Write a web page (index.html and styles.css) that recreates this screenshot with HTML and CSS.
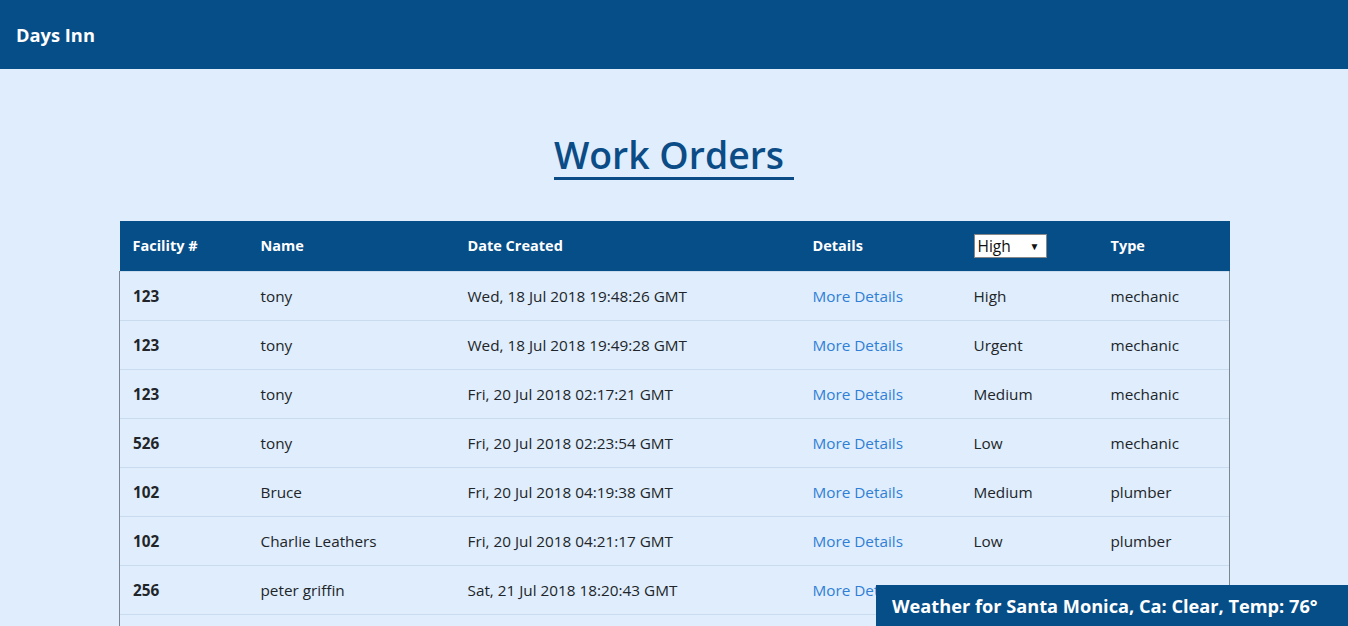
FILE: index.html
```html
<!DOCTYPE html>
<html>
<head>
<meta charset="utf-8">
<link rel="stylesheet" href="styles.css">
</head>
<body>
<nav class="navbar"><span class="brand">Days Inn</span></nav>
<main class="container">
  <h1 class="title"><span class="title-text">Work Orders</span></h1>
  <table class="orders">
    <thead>
      <tr>
        <th class="c-fac">Facility #</th>
        <th class="c-name">Name</th>
        <th class="c-date">Date Created</th>
        <th class="c-det">Details</th>
        <th class="c-pri"><div class="select"><span>High</span><span class="arrow">▼</span></div></th>
        <th class="c-type">Type</th>
      </tr>
    </thead>
    <tbody>
      <tr><th>123</th><td>tony</td><td>Wed, 18 Jul 2018 19:48:26 GMT</td><td><a href="#">More Details</a></td><td>High</td><td>mechanic</td></tr>
      <tr><th>123</th><td>tony</td><td>Wed, 18 Jul 2018 19:49:28 GMT</td><td><a href="#">More Details</a></td><td>Urgent</td><td>mechanic</td></tr>
      <tr><th>123</th><td>tony</td><td>Fri, 20 Jul 2018 02:17:21 GMT</td><td><a href="#">More Details</a></td><td>Medium</td><td>mechanic</td></tr>
      <tr><th>526</th><td>tony</td><td>Fri, 20 Jul 2018 02:23:54 GMT</td><td><a href="#">More Details</a></td><td>Low</td><td>mechanic</td></tr>
      <tr><th>102</th><td>Bruce</td><td>Fri, 20 Jul 2018 04:19:38 GMT</td><td><a href="#">More Details</a></td><td>Medium</td><td>plumber</td></tr>
      <tr><th>102</th><td>Charlie Leathers</td><td>Fri, 20 Jul 2018 04:21:17 GMT</td><td><a href="#">More Details</a></td><td>Low</td><td>plumber</td></tr>
      <tr><th>256</th><td>peter griffin</td><td>Sat, 21 Jul 2018 18:20:43 GMT</td><td><a href="#">More Details</a></td><td>Low</td><td>plumber</td></tr>
      <tr><th>256</th><td>peter griffin</td><td>Sat, 21 Jul 2018 18:25:10 GMT</td><td><a href="#">More Details</a></td><td>High</td><td>plumber</td></tr>
    </tbody>
  </table>
</main>
<div class="weather">Weather for Santa Monica, Ca: Clear, Temp: 76°</div>
</body>
</html>
```
FILE: styles.css
```css
* { box-sizing: border-box; }
html, body {
  margin: 0;
  padding: 0;
}
body {
  background: #dfedfc;
  font-family: "Open Sans", "Liberation Sans", sans-serif;
  color: #212529;
  font-size: 15.3px;
}
.navbar {
  height: 69px;
  background: #064e88;
  display: flex;
  align-items: center;
  padding: 0 16px;
}
.brand {
  color: #fff;
  font-weight: 700;
  font-size: 18.3px;
  margin-top: 0;
}
.container {
  width: 1110px;
  margin: 0 auto;
}
.title {
  text-align: center;
  margin: 64px 0 41px;
  font-size: 37.4px;
  font-weight: 600;
  line-height: 1.2;
  color: #0b4c86;
}
.title-text {
  display: inline-block;
  border-bottom: 3px solid #0b4c86;
  padding-right: 10px;
  padding-left: 0;
  line-height: 44px;
  padding-bottom: 0;
}
.orders {
  width: 1110px;
  border-collapse: collapse;
  table-layout: fixed;
}
.orders th, .orders td {
  padding: 12px 11px 12px 13px;
  height: 49px;
  text-align: left;
  line-height: 24px;
  white-space: nowrap;
}
.orders thead th {
  background: #064e88;
  color: #fff;
  font-weight: 700;
  font-size: 14.5px;
  height: 50px;
  padding-top: 13px;
  padding-bottom: 12px;
}
.orders tbody tr {
  border-top: 1px solid #c9dcef;
  border-left: 1px solid #7d8690;
  border-right: 1px solid #7d8690;
}
.orders tbody th { font-weight: 700; }
.c-fac { width: 128px; }
.c-name { width: 207px; }
.c-date { width: 345px; }
.c-det { width: 161px; }
.c-pri { width: 137px; }
.c-type { width: 132px; }
.orders a {
  color: #2f7fd6;
  text-decoration: none;
}
.select {
  width: 73px;
  height: 24px;
  background: #fff;
  border: 1px solid #888;
  color: #111;
  font-weight: 400;
  font-size: 15.5px;
  display: flex;
  align-items: center;
  justify-content: space-between;
  padding: 0 6px 0 3px;
}
.arrow { font-size: 10px; }
.weather {
  position: fixed;
  right: 0;
  bottom: 0;
  width: 472px;
  height: 41px;
  background: #064e88;
  color: #fff;
  font-weight: 700;
  font-size: 18.2px;
  display: flex;
  align-items: center;
  padding-left: 16px;
}
```
